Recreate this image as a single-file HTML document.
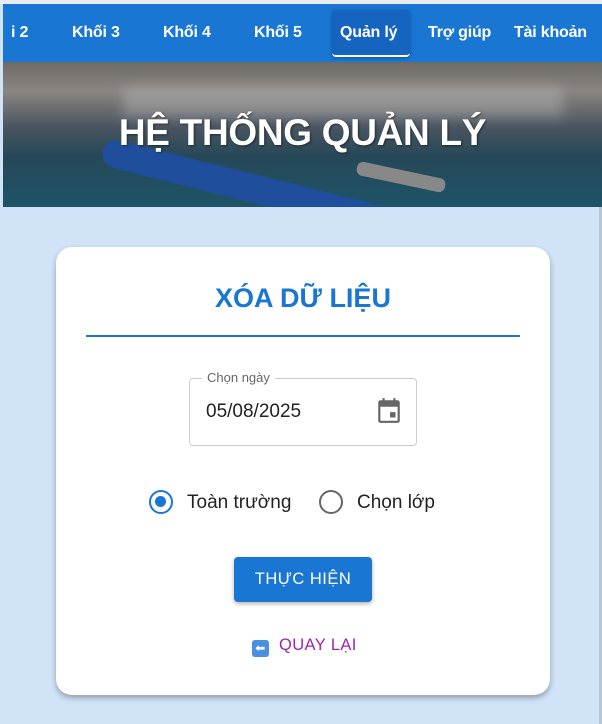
<!DOCTYPE html>
<html><head><meta charset="utf-8"><style>
*{box-sizing:border-box;margin:0;padding:0}
body{width:602px;height:724px;overflow:hidden;background:#d0e3f7;font-family:"Liberation Sans",Roboto,sans-serif;position:relative}
.top{position:absolute;left:0;top:0;width:602px;height:4px;background:#e8ecf0}
.nav{position:absolute;left:3px;top:4px;width:599px;height:58px;background:#1976d2;color:#fff;font-size:16px;font-weight:bold}
.nav span{position:absolute;top:20px;letter-spacing:-.2px}
.act{position:absolute;left:329px;top:6px;width:78px;height:47px;background:#1565c0;border-radius:4px;border-bottom:2px solid #fff;box-shadow:0 1px 3px rgba(0,0,0,.3)}
.hero{position:absolute;left:3px;top:62px;width:599px;height:145px;overflow:hidden;
background:linear-gradient(180deg,#6e6a66 0%,#8a8580 20%,#4a5560 45%,#264858 65%,#1d5468 100%)}
.hero h1{position:absolute;left:0;width:100%;top:50px;text-align:center;color:#fff;font-size:37px;font-weight:bold;letter-spacing:-.3px;text-shadow:1px 1px 2px rgba(0,0,0,.5)}
.rbar{position:absolute;right:0;top:207px;width:3px;height:517px;background:#b9c6d3}
.card{position:absolute;left:56px;top:247px;width:494px;height:448px;background:#fff;border-radius:16px;box-shadow:0 3px 6px rgba(0,0,0,.3)}
.ttl{position:absolute;left:0;width:100%;top:36px;text-align:center;color:#1976d2;font-size:27px;font-weight:bold}
.line{position:absolute;left:30px;width:434px;top:88px;height:2px;background:#1976d2}
.fld{position:absolute;left:133px;top:131px;width:228px;height:68px;border:1px solid #ccc;border-radius:4px}
.lbl{position:absolute;left:12px;top:-9px;background:#fff;padding:0 5px;font-size:13px;color:#666}
.val{position:absolute;left:16px;top:22px;font-size:19px;color:#222}
.r{position:absolute;top:243px;width:24px;height:24px;border-radius:50%;border:2.5px solid #666}
.rt{position:absolute;top:245px;font-size:19px;color:#222}
.btn{position:absolute;left:178px;top:310px;width:138px;height:45px;background:#1976d2;border-radius:4px;color:#fff;font-size:16.5px;text-align:center;line-height:45px;letter-spacing:.5px;box-shadow:0 2px 4px rgba(0,0,0,.3)}
.back{position:absolute;left:196px;top:389px;font-size:16.5px;color:#9c27b0;letter-spacing:.4px}
.ic{display:inline-block;width:17px;height:17px;background:#4a90e2;border-radius:3px;vertical-align:-2px;margin-right:10px;color:#fff;font-size:12px;line-height:17px;text-align:center}
</style></head><body>
<div class="top"></div>
<div class="nav">
<div class="act"></div>
<span style="left:8px">i 2</span>
<span style="left:69px">Khối 3</span>
<span style="left:160px">Khối 4</span>
<span style="left:251px">Khối 5</span>
<span style="left:337px">Quản lý</span>
<span style="left:425px">Trợ giúp</span>
<span style="left:511px">Tài khoản</span>
</div>
<div class="hero">
<div style="position:absolute;left:120px;top:25px;width:440px;height:30px;background:rgba(200,200,205,.35);filter:blur(6px)"></div>
<div style="position:absolute;left:100px;top:75px;width:330px;height:28px;background:#1f4f9c;border-radius:14px;transform:rotate(14deg);transform-origin:left;filter:blur(.6px)"></div>
<div style="position:absolute;left:353px;top:108px;width:90px;height:14px;background:#888;border-radius:6px;transform:rotate(12deg)"></div>
<h1>HỆ THỐNG QUẢN LÝ</h1>
</div>
<div class="rbar"></div>
<div class="card">
<div class="ttl">XÓA DỮ LIỆU</div>
<div class="line"></div>
<div class="fld"><div class="lbl">Chọn ngày</div><div class="val">05/08/2025</div>
<svg style="position:absolute;left:186px;top:18px" width="26" height="28" viewBox="0 0 24 26"><path fill="#666" d="M6 1h2v2h8V1h2v2h2a2 2 0 0 1 2 2v17a2 2 0 0 1-2 2H4a2 2 0 0 1-2-2V5a2 2 0 0 1 2-2h2zM4 9v13h16V9zm9 5h5v5h-5z"/></svg></div>
<div class="r" style="left:93px;border-color:#1976d2"><div style="position:absolute;left:4px;top:4px;width:11px;height:11px;border-radius:50%;background:#1976d2"></div></div>
<div class="rt" style="left:131px">Toàn trường</div>
<div class="r" style="left:263px"></div>
<div class="rt" style="left:301px">Chọn lớp</div>
<div class="btn">THỰC HIỆN</div>
<div class="back"><span class="ic">⬅</span>QUAY LẠI</div>
</div>
</body></html>
